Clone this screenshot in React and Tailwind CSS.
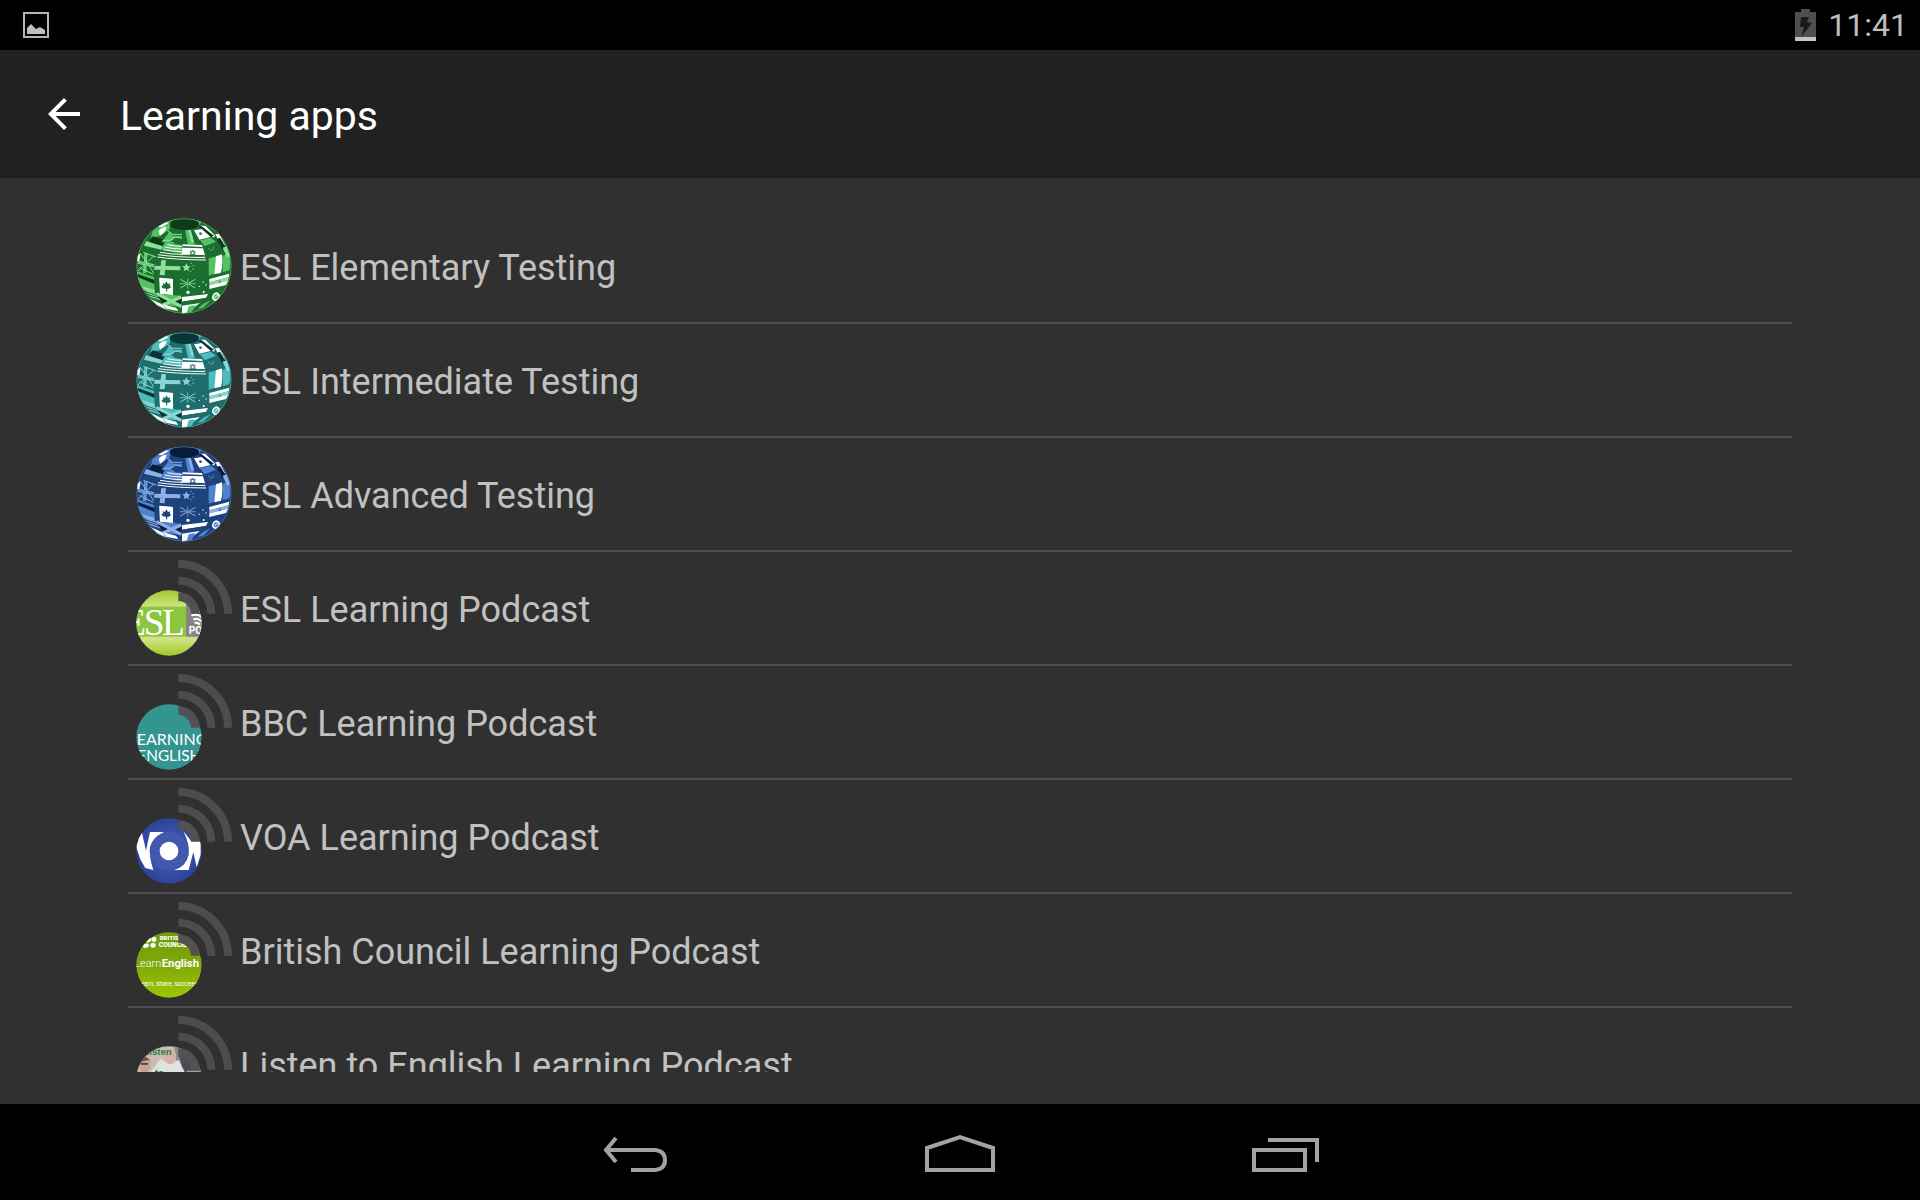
import React from "react";
import { MdArrowBack } from "react-icons/md";

const greens = { base: "#1b6e2f", mid: "#55c064", light: "#8fe09a", dark: "#0d3a18" };
const teals = { base: "#1f6d6d", mid: "#4dbdbb", light: "#8ad6d4", dark: "#0a3536" };
const blues = { base: "#1e427c", mid: "#4f83cf", light: "#8db1e6", dark: "#0a1c3c" };

const apps = [
  { name: "ESL Elementary Testing", icon: <Globe id="elementary" colors={greens} /> },
  { name: "ESL Intermediate Testing", icon: <Globe id="intermediate" colors={teals} /> },
  { name: "ESL Advanced Testing", icon: <Globe id="advanced" colors={blues} /> },
  { name: "ESL Learning Podcast", icon: <Podcast id="esl"><EslArt /></Podcast> },
  { name: "BBC Learning Podcast", icon: <Podcast id="bbc"><BbcArt /></Podcast> },
  { name: "VOA Learning Podcast", icon: <Podcast id="voa"><VoaArt /></Podcast> },
  { name: "British Council Learning Podcast", icon: <Podcast id="council"><CouncilArt /></Podcast> },
  { name: "Listen to English Learning Podcast", icon: <Podcast id="listen"><ListenArt /></Podcast> },
];

// Ball covered with flags, tinted by level
function Globe({ id, colors }) {
  const { base, mid, light, dark } = colors;
  return (
    <svg viewBox="48 39 288 288" className="w-24 h-24 shrink-0" aria-hidden="true">
      <defs>
        <clipPath id={id}>
          <circle cx="192" cy="183" r="143" />
        </clipPath>
      </defs>
      <g clipPath={`url(#${id})`}>
        <circle cx="192" cy="183" r="143" fill={base} />

        {/* top ring */}
        <path d="M140 50Q192 30 245 50L236 62Q192 40 150 62Z" fill={mid} />
        <path d="M98 78L140 50L152 56L148 74L118 94L92 98Z" fill={mid} />
        <path d="M112 66L138 50L146 54L126 66ZM116 78Q126 64 140 66Q136 84 120 92Z" fill="#fff" />
        <path d="M98 94L136 106L130 124L86 112Z" fill={dark} />
        <path d="M78 108L128 124L124 134L72 122Z" fill={light} />
        <path d="M148 78L160 92H186V98H166L150 112L124 112L140 92Z" fill={mid} />
        <path d="M142 76L158 88L186 88M128 106L150 106L166 96L186 100" fill="none" stroke={light} strokeWidth="3" />
        <path d="M134 112L124 132L184 146V120L166 118L158 110Z" fill={mid} />
        <path d="M195 76L212 74L224 118H204Z" fill={mid} />
        <path d="M204 76L212 74L222 112L214 112Z" fill={light} />
        <path d="M222 76L246 72L272 96L238 104Z" fill="#fff" />
        <path d="M236 84L243 82L247 88L240 90Z" fill={base} />
        <path d="M238 62L256 62L286 92L280 98Z" fill="#fff" />
        <path d="M234 62L244 63L282 92L274 96Z" fill={dark} />
        <path d="M240 106L272 98L288 110L254 124Z" fill={mid} />
        <path d="M286 88L298 86L316 122L302 120Z" fill="#fff" />
        <path d="M290 102L300 98L318 128L306 134Z" fill={dark} />
        <path d="M256 126L300 116L308 142L264 156Z" fill={base} />
        <path d="M264 132l5 -3M270 137l5 -3M278 128l4 -2M276 134l5 -2" stroke={light} strokeWidth="2" />

        {/* stripes and hexagram flag */}
        <path d="M188 118L246 120L256 154L184 152Z" fill="#fff" />
        <path d="M188 123L248 126L249 130L187 128ZM185 149L254 150L255 153L184 153Z" fill={base} />
        <path d="M218 135L226 149H210ZM218 153L226 139H210Z" fill="none" stroke={base} strokeWidth="2" />
        <path d="M142 119Q162 124 186 124M134 126Q160 132 186 132M128 134Q156 140 186 140M120 142Q154 148 186 148M114 149Q156 156 256 158M112 156Q160 164 258 165" fill="none" stroke="#fff" strokeWidth="3" />

        {/* union jack at the left edge */}
        <path d="M64 144L102 152V206L54 196Z" fill={base} />
        <path d="M78 144L74 204M54 172L102 182" stroke={light} strokeWidth="9" />
        <path d="M78 144L74 204M54 172L102 182" stroke={mid} strokeWidth="4" />
        <path d="M62 146L102 204M102 152L54 198M70 142L108 156M58 188L100 208" stroke={light} strokeWidth="3" />
        <path d="M52 152L62 144L58 168H50Z" fill="#fff" />

        {/* nordic cross */}
        <path d="M108 166H182V214H100Z" fill={base} />
        <path d="M124 165L138 166L134 211L119 210ZM104 182L181 184V196L102 194Z" fill={light} />

        <path d="M199 174L203 183L212 184L205 190L207 199L199 194L191 199L193 190L186 184L195 183Z" fill={light} />
        <g fill={light}>
          <circle cx="214" cy="175" r="2" />
          <circle cx="220" cy="182" r="2" />
          <circle cx="219" cy="192" r="2" />
          <circle cx="212" cy="199" r="2" />
        </g>

        {/* tricolours on the right */}
        <path d="M266 160L290 154L284 206L266 212Z" fill={mid} />
        <path d="M288 154L306 148Q310 176 303 203L283 208Z" fill="#fff" />
        <path d="M309 152L326 144Q334 176 328 196L308 202Z" fill={mid} />
        <path d="M308 128L320 124L330 154L322 158Z" fill={light} />
        <path d="M268 222L328 206L326 217L268 232Z" fill="#fff" />
        <path d="M268 232L326 217L324 227L268 241Z" fill={light} />
        <path d="M268 241L324 227L318 240L268 252Z" fill="#fff" />
        <circle cx="299" cy="230" r="5" fill={mid} />

        {/* left bands */}
        <path d="M50 198L102 216V224L52 207Z" fill={mid} />
        <path d="M50 206L103 226V236L54 217Z" fill={dark} />
        <path d="M52 216L103 237L104 258L62 242Z" fill={mid} />
        <path d="M62 242L104 255V264L72 254Z" fill={light} />

        {/* maple leaf */}
        <path d="M118 218L159 222V270L120 266Z" fill={light} />
        <path d="M118 218L126 219L128 267L120 266ZM126 219L151 221V269L127 267ZM151 221L159 222V270L151 269Z" fill="#fff" />
        <path d="M139 229L144 237L151 235L149 242L154 246L145 252L141 251L142 259H138V251L128 250L124 243L130 241L128 234L135 237Z" fill={base} />

        {/* small union jack with southern stars */}
        <path d="M181 223L226 249M226 223L181 249M203 221V251M180 236H227" stroke={light} strokeWidth="3" />
        <path d="M203 222V250M181 236H226" stroke={base} strokeWidth="1" />
        <g fill="#fff">
          <circle cx="204" cy="262" r="5" />
          <circle cx="249" cy="231" r="2" />
          <circle cx="238" cy="244" r="2" />
          <circle cx="258" cy="240" r="2" />
          <circle cx="251" cy="261" r="3" />
        </g>

        {/* bottom row */}
        <path d="M74 254L112 266L130 290L92 280Z" fill={light} />
        <path d="M76 260L112 272M82 268L118 280M88 277L124 288" stroke={base} strokeWidth="3" />
        <path d="M108 268L184 274V306L132 300Z" fill={dark} />
        <path d="M116 266L182 272L166 284L148 284Z" fill={mid} />
        <path d="M132 300L158 288L184 306Z" fill={mid} />
        <path d="M110 266L184 304M184 276L128 300" stroke={light} strokeWidth="9" />
        <path d="M186 276L264 267L258 278L186 290Z" fill="#fff" />
        <path d="M184 290L256 280L242 294L186 302Z" fill={base} />
        <path d="M128 298L168 308L176 318L140 312Z" fill="#fff" />
        <path d="M92 282L126 298L140 314L112 302Z" fill="#fff" />
        <path d="M186 302L240 294L224 306L206 322L186 326Z" fill="#fff" />
        <path d="M206 304L226 300L216 320L200 324Z" fill={mid} />
        <path d="M250 296L272 286L250 308L232 312Z" fill={mid} />
        <path d="M268 262L316 246L306 264L296 264L278 284L262 284Z" fill={base} />
        <ellipse cx="288" cy="275" rx="11" ry="13" transform="rotate(30 288 275)" fill="#fff" />
        <ellipse cx="288" cy="275" rx="7" ry="8" transform="rotate(30 288 275)" fill={mid} />
        <path d="M284 278L293 270" stroke="#fff" strokeWidth="3" />

        <ellipse cx="193" cy="57" rx="44" ry="18" fill={dark} />
        <circle cx="192" cy="183" r="142" fill="none" stroke={mid} strokeWidth="3" opacity="0.7" />
      </g>
    </svg>
  );
}

// Round cover art with radio waves at its top right
function Podcast({ id, children }) {
  return (
    <svg viewBox="0 0 288 288" className="w-24 h-24 shrink-0" aria-hidden="true">
      <defs>
        <clipPath id={id}>
          <circle cx="99" cy="189" r="98" />
        </clipPath>
      </defs>
      <g clipPath={`url(#${id})`}>{children}</g>
      <g fill="none" stroke="#4d4d4e" strokeWidth="24">
        <path d="M127 12A149 149 0 0 1 276 161" />
        <path d="M127 62A99 99 0 0 1 226 161" />
        <path d="M127 110A51 51 0 0 1 178 161" stroke="#525053" strokeWidth="26" />
      </g>
    </svg>
  );
}

function EslArt() {
  return (
    <>
      <defs>
        <linearGradient id="lime" x1="0" y1="0" x2="0" y2="1">
          <stop offset="0" stopColor="#a2c92a" />
          <stop offset="0.28" stopColor="#d3e58a" />
          <stop offset="0.75" stopColor="#cfe283" />
          <stop offset="1" stopColor="#a0c824" />
        </linearGradient>
      </defs>
      <rect x="0" y="90" width="198" height="198" fill="url(#lime)" />
      <rect x="0" y="140" width="150" height="90" fill="#8cc63e" />
      <path d="M150 100H198V230H150Z" fill="#858585" />
      <g fill="#fff" fontSize="112" fontFamily="'Liberation Serif', serif">
        <text x="-38" y="225">E</text>
        <text x="23" y="225">S</text>
        <text x="78" y="225">L</text>
      </g>
      <g fill="none" stroke="#fff" strokeWidth="6">
        <path d="M166 167Q184 160 198 172" />
        <path d="M172 179Q184 172 196 184" />
        <path d="M176 190Q184 184 192 194" />
      </g>
      <text x="158" y="221" fontSize="31" fontWeight="700" fill="#fff" fontFamily="Roboto, sans-serif">PO</text>
    </>
  );
}

function BbcArt() {
  return (
    <>
      <rect x="0" y="90" width="198" height="198" fill="#349490" />
      <g fill="#fff" fontFamily="Lato, sans-serif" textAnchor="middle">
        <text x="96" y="212" fontSize="48">LEARNING</text>
        <text x="100" y="262" fontSize="46">ENGLISH</text>
      </g>
    </>
  );
}

function VoaArt() {
  return (
    <>
      <defs>
        <radialGradient id="royal">
          <stop offset="0" stopColor="#4c63b6" />
          <stop offset="1" stopColor="#2c439b" />
        </radialGradient>
      </defs>
      <rect x="0" y="90" width="198" height="198" fill="url(#royal)" />
      <path d="M3 150L18 134L30 188L42 132H84Q52 150 42 176Q38 200 52 246L28 240L14 216L0 176Z" fill="#fff" />
      <path d="M114 246Q150 236 158 200Q162 170 142 130L166 160H194V200L182 238L172 192L158 246Z" fill="#fff" />
      <circle cx="99" cy="189" r="57" fill="#4158ad" />
      <circle cx="99" cy="189" r="28" fill="#fff" />
    </>
  );
}

function CouncilArt() {
  return (
    <>
      <defs>
        <linearGradient id="leaf" x1="0" y1="0" x2="0" y2="1">
          <stop offset="0" stopColor="#6f9c0a" />
          <stop offset="0.5" stopColor="#7fa80a" />
          <stop offset="1" stopColor="#9cc800" />
        </linearGradient>
      </defs>
      <rect x="0" y="90" width="198" height="198" fill="url(#leaf)" />
      <g fill="#fff">
        <ellipse cx="38" cy="113" rx="9" ry="7" transform="rotate(-40 38 113)" />
        <ellipse cx="54" cy="112" rx="7" ry="8" />
        <ellipse cx="30" cy="131" rx="9" ry="6" transform="rotate(-20 30 131)" />
        <ellipse cx="51" cy="130" rx="8" ry="7" />
      </g>
      <g fill="#fff" fontFamily="Roboto, sans-serif">
        <text x="71" y="115" fontSize="18" fontWeight="900">BRITISH</text>
        <text x="68" y="135" fontSize="20" fontWeight="900">COUNCIL</text>
        <text x="76" y="195" fontSize="33" fontWeight="300" textAnchor="end">Learn</text>
        <text x="77" y="195" fontSize="34" fontWeight="700">English</text>
        <text x="98" y="252" fontSize="19" textAnchor="middle">learn, share, succeed</text>
      </g>
    </>
  );
}

function ListenArt() {
  return (
    <>
      <rect x="0" y="88" width="198" height="200" fill="#cdbcb4" />
      <path d="M114 88H198V190H130Z" fill="#8b8587" />
      <path d="M130 118H190L198 190H146Z" fill="#4a4c55" />
      <path d="M44 168L74 128L98 144L128 132L146 168V190H40Z" fill="#dfe3df" />
      <ellipse cx="104" cy="122" rx="17" ry="23" fill="#d3b3a6" />
      <ellipse cx="26" cy="146" rx="18" ry="24" fill="#c9a393" />
      <path d="M8 134Q24 112 44 134L36 132L14 138Z" fill="#6b5048" />
      <path d="M14 141H36V146H14Z" fill="#4b3c3a" />
      <path d="M152 164H198V190H152Z" fill="#b59f82" />
      <g fill="#2b7d3d" fontFamily="'Liberation Sans', sans-serif" fontWeight="700">
        <text x="22" y="118" fontSize="29">Listen</text>
        <text x="56" y="182" fontSize="30">to</text>
      </g>
    </>
  );
}

const StatusBar = () => {
  return (
    <div className="flex h-[50px] shrink-0 items-center justify-between bg-black pl-[23px] pr-3">
      <svg viewBox="0 0 26 26" className="w-[26px] h-[26px]" aria-hidden="true">
        <rect x="1" y="1" width="24" height="24" fill="none" stroke="#b4b4b4" strokeWidth="2" />
        <path d="M4 22V16L8 12L13 17L17 15L22 18V22Z" fill="#bebebe" />
      </svg>
      <div className="flex items-center gap-3">
        <svg viewBox="0 0 21 32" className="w-[21px] h-8" aria-hidden="true">
          <path d="M6 0H15V3H21V32H0V3H6Z" fill="#4e4e4e" />
          <path d="M0 28H21V32H0Z" fill="#c4c4c4" />
          <path d="M6 8H14L12 13L17 14L6 28L9 18H5Z" fill="#1a1a1a" />
        </svg>
        <time className="text-[32px] leading-10 text-[#bebebe]">11:41</time>
      </div>
    </div>
  );
};

const NavBar = () => {
  return (
    <nav className="flex h-24 shrink-0 items-center justify-center bg-black pt-0.5 text-[#a3a3a3]">
      <button aria-label="Back" className="flex h-full w-[325px] items-center justify-center">
        <svg viewBox="0 0 64 40" className="w-16 h-10" fill="none" stroke="currentColor" strokeWidth="4">
          <path d="M13 5L3 17L13 29" />
          <path d="M3 17H52Q62 18 62 27Q62 36 52 37H28" />
        </svg>
      </button>
      <button aria-label="Home" className="flex h-full w-[325px] items-center justify-center">
        <svg viewBox="0 0 70 40" className="w-[70px] h-10" fill="none" stroke="currentColor" strokeWidth="4">
          <path d="M2 15L35 4L68 15V37H2Z" />
        </svg>
      </button>
      <button aria-label="Recent apps" className="flex h-full w-[325px] items-center justify-center">
        <svg viewBox="0 0 68 40" className="w-[68px] h-10" fill="none" stroke="currentColor" strokeWidth="4">
          <path d="M3 17H54V37H3Z" />
          <path d="M17 7H66V29" />
        </svg>
      </button>
    </nav>
  );
};

const App = () => {
  return (
    <div className="flex h-screen flex-col overflow-hidden bg-[#303030] font-[Roboto,sans-serif]">
      <StatusBar />
      <header className="flex h-32 shrink-0 items-center gap-8 bg-[#212121] px-10 text-white">
        <button aria-label="Navigate up">
          <MdArrowBack className="w-12 h-12" />
        </button>
        <h1 className="pt-1 text-[41px] leading-[48px]">Learning apps</h1>
      </header>
      <main className="min-h-0 flex-1 px-32 py-8">
        <ul className="h-full overflow-hidden">
          {apps.map((app) => (
            <li key={app.name} className="border-b-2 border-[#4e4e4e]">
              <a href="#" className="flex h-28 items-center gap-2 px-2 text-[36px] leading-[48px] text-[#c1c1c1]">
                {app.icon}
                <span className="pt-1">{app.name}</span>
              </a>
            </li>
          ))}
        </ul>
      </main>
      <NavBar />
    </div>
  );
};

export default App;
